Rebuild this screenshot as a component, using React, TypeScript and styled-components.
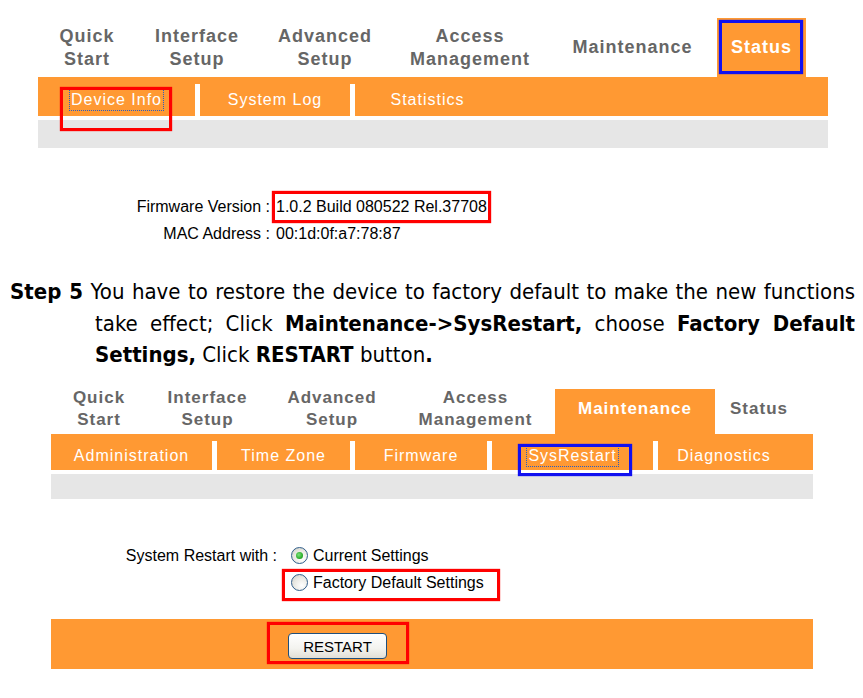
import React from 'react';
import styled, { createGlobalStyle } from 'styled-components';

const orange = '#ff9933';
const gray = '#e6e6e6';
const navGray = '#666666';

const GlobalStyle = createGlobalStyle`
    body {
        margin: 0;
        background: #ffffff;
        font-family: 'Liberation Sans', Arial, sans-serif;
    }
`;

const Page = styled.div`
    width: 863px;
    padding-top: 18px;
`;

const Panel = styled.div<{ $left: number; $width: number; $top?: number }>`
    margin-left: ${(p) => p.$left}px;
    margin-top: ${(p) => p.$top ?? 0}px;
    width: ${(p) => p.$width}px;
`;

const NavRow = styled.div<{ $h: number }>`
    display: flex;
    height: ${(p) => p.$h}px;
`;

const NavCell = styled.div<{
    $w: number;
    $active?: boolean;
    $size: number;
    $lh: number;
    $pb: number;
}>`
    position: relative;
    width: ${(p) => p.$w}px;
    display: flex;
    align-items: center;
    justify-content: center;
    box-sizing: border-box;
    padding-bottom: ${(p) => p.$pb}px;
    text-align: center;
    font-size: ${(p) => p.$size}px;
    line-height: ${(p) => p.$lh}px;
    font-weight: bold;
    letter-spacing: 1px;
    color: ${(p) => (p.$active ? '#ffffff' : navGray)};
    background: ${(p) => (p.$active ? orange : 'transparent')};
`;

const SubBar = styled.div<{ $h: number }>`
    display: flex;
    height: ${(p) => p.$h}px;
    box-sizing: border-box;
    padding-top: 7px;
    background: ${orange};
`;

const SubTab = styled.div<{ $w: number }>`
    position: relative;
    width: ${(p) => p.$w}px;
    display: flex;
    align-items: center;
    justify-content: center;
    font-size: 16px;
    letter-spacing: 1px;
    color: #ffffff;
`;

const Divider = styled.span`
    width: 5px;
    background: #ffffff;
`;

const Focused = styled.span`
    outline: 1px dotted #2a5cc0;
    outline-offset: 1px;
`;

const GrayBar = styled.div<{ $h: number }>`
    margin-top: 4px;
    height: ${(p) => p.$h}px;
    background: ${gray};
`;

const Mark = styled.span<{ $color: string; $inset: string }>`
    position: absolute;
    inset: ${(p) => p.$inset};
    border: 3px solid ${(p) => p.$color};
    box-shadow: 0 0 1px ${(p) => p.$color};
    pointer-events: none;
    z-index: 2;
`;

const InfoTable = styled.div`
    display: grid;
    grid-template-columns: 232px auto;
    column-gap: 6px;
    margin-top: 44.5px;
    font-size: 16px;
    line-height: 27px;
    color: #000000;
`;

const Label = styled.span`
    text-align: right;
    white-space: nowrap;
`;

const Value = styled.span`
    position: relative;
    justify-self: start;
`;

const StepText = styled.p`
    margin: 29.5px 8px 0 0;
    padding-left: 95px;
    text-indent: -85px;
    font-family: 'DejaVu Sans Condensed', 'DejaVu Sans', sans-serif;
    font-size: 22px;
    line-height: 31.5px;
    text-align: justify;
    color: #000000;

    b {
        font-weight: bold;
    }
`;

const RestartForm = styled.div`
    display: grid;
    grid-template-columns: 226px auto;
    column-gap: 11px;
    margin-top: 42.5px;
    font-size: 16px;
    line-height: 27px;
    color: #000000;
`;

const Options = styled.div`
    display: flex;
    flex-direction: column;
    align-items: flex-start;
`;

const Option = styled.label`
    position: relative;
    display: flex;
    align-items: center;
    gap: 5px;
    padding-left: 3px;
`;

const Radio = styled.span<{ $checked?: boolean }>`
    position: relative;
    width: 15px;
    height: 15px;
    border: 1px solid #2f5d8a;
    border-radius: 50%;
    background: radial-gradient(circle at 65% 70%, #ffffff 0%, #e8e8e2 55%, #c9c9c0 100%);

    &::after {
        content: '';
        display: ${(p) => (p.$checked ? 'block' : 'none')};
        position: absolute;
        left: 4px;
        top: 4px;
        width: 7px;
        height: 7px;
        border-radius: 50%;
        background: radial-gradient(circle at 40% 40%, #7be27b 0%, #22a622 70%, #1a7f1a 100%);
    }
`;

const ActionBar = styled.div`
    display: flex;
    align-items: center;
    height: 50px;
    box-sizing: border-box;
    padding-top: 4px;
    margin-top: 23.5px;
    background: ${orange};
`;

const ButtonWrap = styled.span`
    position: relative;
    margin-left: 237px;
    display: inline-flex;
`;

const RestartButton = styled.button`
    width: 99px;
    height: 26px;
    padding: 0;
    border: 1px solid #1f4f7c;
    border-radius: 4px;
    background: linear-gradient(#ffffff 0%, #f3f3ef 60%, #e2dfd6 100%);
    font-family: 'Liberation Sans', Arial, sans-serif;
    font-size: 15px;
    color: #000000;
`;

const topNav = [
    { w: 98, label: ['Quick', 'Start'] },
    { w: 122, label: ['Interface', 'Setup'] },
    { w: 134, label: ['Advanced', 'Setup'] },
    { w: 156, label: ['Access', 'Management'] },
    { w: 169, label: ['Maintenance'] },
    { w: 89, label: ['Status'] },
];

const bottomNav = [
    { w: 96, label: ['Quick', 'Start'] },
    { w: 121, label: ['Interface', 'Setup'] },
    { w: 128, label: ['Advanced', 'Setup'] },
    { w: 159, label: ['Access', 'Management'] },
    { w: 160, label: ['Maintenance'] },
    { w: 88, label: ['Status'] },
];

const renderLabel = (label: string[]) =>
    label.map((line, i) => (
        <React.Fragment key={line}>
            {i > 0 && <br />}
            {line}
        </React.Fragment>
    ));

export default function App() {
    return (
        <Page>
            <GlobalStyle />

            <Panel $left={38} $width={790}>
                <NavRow $h={59}>
                    {topNav.map((n) => (
                        <NavCell
                            key={n.label[0]}
                            $w={n.w}
                            $size={18}
                            $lh={23}
                            $pb={0}
                            $active={n.label[0] === 'Status'}
                        >
                            <span>{renderLabel(n.label)}</span>
                            {n.label[0] === 'Status' && (
                                <Mark $color="#1010f0" $inset="2px 3px 3px 2px" />
                            )}
                        </NavCell>
                    ))}
                </NavRow>
                <SubBar $h={39}>
                    <SubTab $w={157}>
                        <Focused>Device Info</Focused>
                        <Mark $color="#ff0000" $inset="3px 23px -15px 22px" />
                    </SubTab>
                    <Divider />
                    <SubTab $w={150}>System Log</SubTab>
                    <Divider />
                    <SubTab $w={145}>Statistics</SubTab>
                </SubBar>
                <GrayBar $h={28} />

                <InfoTable>
                    <Label>Firmware Version :</Label>
                    <Value>
                        1.0.2 Build 080522 Rel.37708
                        <Mark $color="#ff0000" $inset="-2px -4px -3px -4px" />
                    </Value>
                    <Label>MAC Address :</Label>
                    <Value>00:1d:0f:a7:78:87</Value>
                </InfoTable>
            </Panel>

            <StepText>
                <b>Step 5</b> You have to restore the device to factory default to make
                the new functions take effect; Click <b>Maintenance-&gt;SysRestart,</b>{' '}
                choose <b>Factory Default Settings,</b> Click <b>RESTART</b> button<b>.</b>
            </StepText>

            <Panel $left={51} $width={762} $top={18.5}>
                <NavRow $h={45}>
                    {bottomNav.map((n) => (
                        <NavCell
                            key={n.label[0]}
                            $w={n.w}
                            $size={17}
                            $lh={22}
                            $pb={6}
                            $active={n.label[0] === 'Maintenance'}
                        >
                            <span>{renderLabel(n.label)}</span>
                        </NavCell>
                    ))}
                </NavRow>
                <SubBar $h={36}>
                    <SubTab $w={161}>Administration</SubTab>
                    <Divider />
                    <SubTab $w={133}>Time Zone</SubTab>
                    <Divider />
                    <SubTab $w={132}>Firmware</SubTab>
                    <Divider />
                    <SubTab $w={161}>
                        <Focused>SysRestart</Focused>
                        <Mark $color="#1010f0" $inset="3px 21px -6px 26px" />
                    </SubTab>
                    <Divider />
                    <SubTab $w={132}>Diagnostics</SubTab>
                </SubBar>
                <GrayBar $h={25} />

                <RestartForm>
                    <Label>System Restart with :</Label>
                    <Options>
                        <Option>
                            <Radio $checked />
                            Current Settings
                        </Option>
                        <Option>
                            <Radio />
                            Factory Default Settings
                            <Mark $color="#ff0000" $inset="0 -16px -5px -6px" />
                        </Option>
                    </Options>
                </RestartForm>

                <ActionBar>
                    <ButtonWrap>
                        <RestartButton type="button">RESTART</RestartButton>
                        <Mark $color="#ff0000" $inset="-11px -22px -5px -21px" />
                    </ButtonWrap>
                </ActionBar>
            </Panel>
        </Page>
    );
}
